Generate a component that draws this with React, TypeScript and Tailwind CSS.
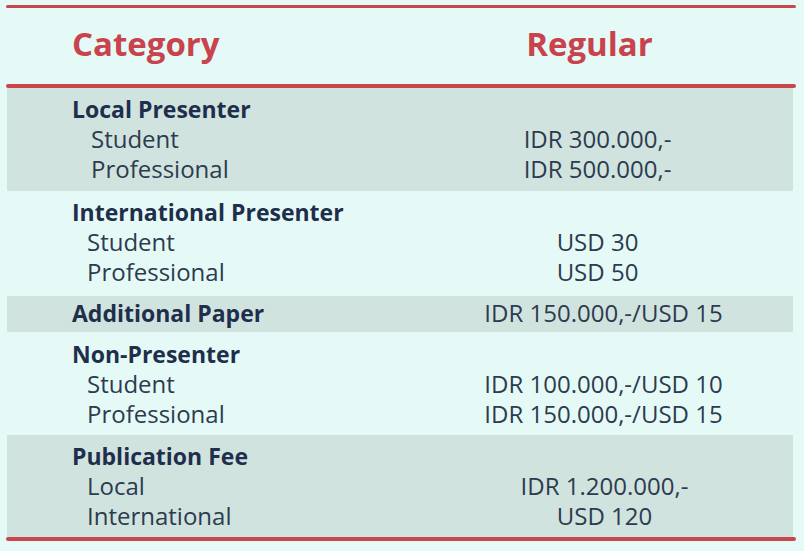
const groups = [
  {
    title: "Local Presenter",
    shaded: true,
    pad: "pt-[6px] pb-[7px]",
    rows: [
      ["Student", "IDR 300.000,-"],
      ["Professional", "IDR 500.000,-"],
    ],
    indent: "pl-[19px]",
    shift: "pl-[2px]",
  },
  {
    title: "International Presenter",
    shaded: false,
    pad: "pt-[6px] pb-[9px]",
    rows: [
      ["Student", "USD 30"],
      ["Professional", "USD 50"],
    ],
    indent: "pl-[15px]",
    shift: "pl-[2px]",
  },
  {
    title: "Additional Paper",
    value: "IDR 150.000,-/USD 15",
    shaded: true,
    pad: "pt-[2px] pb-[4px]",
    rows: [],
    indent: "",
    shift: "pl-[14px]",
  },
  {
    title: "Non-Presenter",
    shaded: false,
    pad: "pt-[7px] pb-[6px]",
    rows: [
      ["Student", "IDR 100.000,-/USD 10"],
      ["Professional", "IDR 150.000,-/USD 15"],
    ],
    indent: "pl-[15px]",
    shift: "pl-[14px]",
  },
  {
    title: "Publication Fee",
    shaded: true,
    pad: "pt-[6px] pb-[6px]",
    rows: [
      ["Local", "IDR 1.200.000,-"],
      ["International", "USD 120"],
    ],
    indent: "pl-[15px]",
    shift: "pl-[16px]",
  },
];

export default function App() {
  return (
    <div
      className="w-[804px] h-[551px] bg-[#e5faf7] pt-[5px] pl-[6px] text-[#2d3b4e]"
      style={{ fontFamily: '"Open Sans", "Noto Sans", sans-serif' }}
    >
      <div className="w-[790px]">
        <div className="h-[3px] bg-[#c9464d] rounded-full" />
        <div className="h-[76px] grid grid-cols-2 items-center text-[33px] font-bold text-[#c8434b] pb-[4px]">
          <div className="pl-[66px]">Category</div>
          <div className="text-center pr-[18px]">Regular</div>
        </div>
        <div className="h-[4px] bg-[#c9464d] rounded-full" />
        {groups.map((g) => (
          <div
            key={g.title}
            className={`ml-[1px] mr-[3px] ${g.pad} ${g.shaded ? "bg-[#d0e3df]" : ""}`}
          >
            <div className="grid grid-cols-2 leading-[30px]">
              <div className="pl-[65px] font-bold text-[23px] text-[#1e2e4b]">
                {g.title}
              </div>
              <div className={`text-center text-[24px] ${g.shift}`}>{g.value ?? ""}</div>
              {g.rows.map(([label, value]) => (
                <div key={label} className="contents">
                  <div className="pl-[65px] text-[24px]">
                    <span className={g.indent}>{label}</span>
                  </div>
                  <div className={`text-center text-[24px] ${g.shift}`}>{value}</div>
                </div>
              ))}
            </div>
          </div>
        ))}
        <div className="h-[4px] bg-[#c9464d] rounded-full" />
      </div>
    </div>
  );
}
